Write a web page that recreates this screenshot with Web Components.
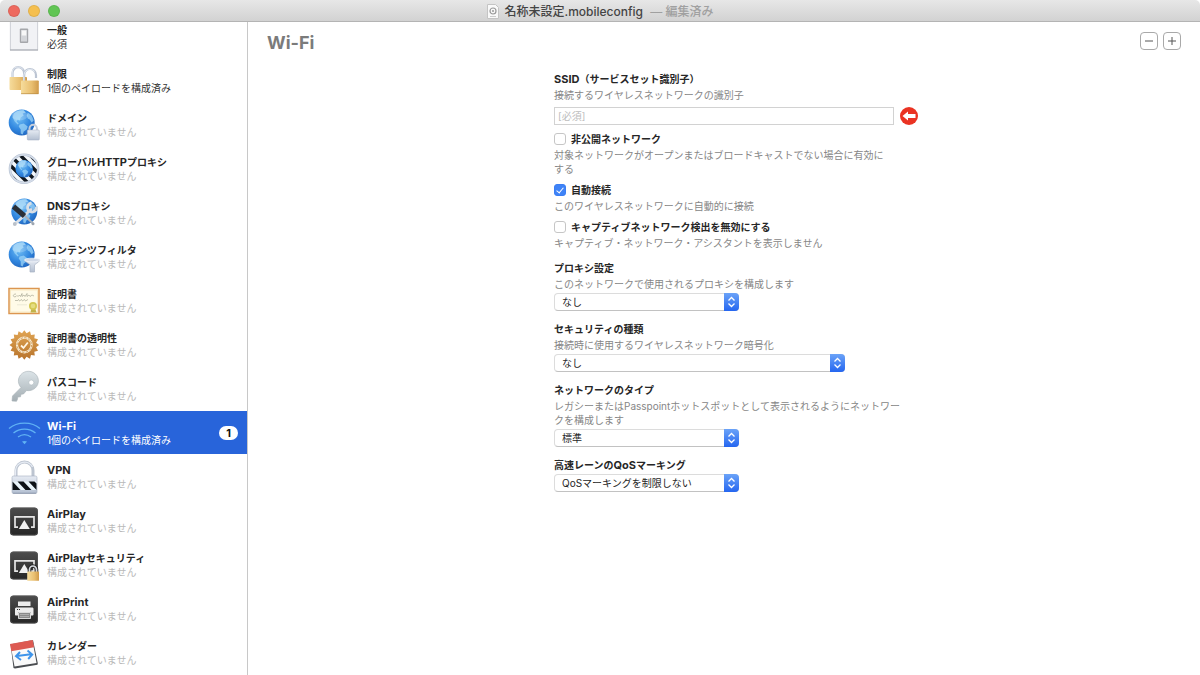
<!DOCTYPE html>
<html lang="ja">
<head>
<meta charset="utf-8">
<title>名称未設定.mobileconfig</title>
<style>
  body {
    margin: 0;
    background: #fff;
    color: #262626;
    font-family: Inter, "Noto Sans CJK JP", sans-serif;
    font-size: 10px;
    line-height: 14px;
  }

  /* latin words in titles run a size larger beside kana and kanji */
  .en { font-size: 11px; line-height: 1; }
</style>
</head>
<body>
<config-window>
  <title-bar slot="bar" status="編集済み">名称未設定.mobileconfig</title-bar>

  <payload-list slot="side">
    <payload-item icon="general" state="required">一般<span slot="note">必須</span></payload-item>
    <payload-item icon="locks" state="required">制限<span slot="note">1個のペイロードを構成済み</span></payload-item>
    <payload-item icon="domain">ドメイン</payload-item>
    <payload-item icon="proxy">グローバル<span class="en">HTTP</span>プロキシ</payload-item>
    <payload-item icon="dns"><span class="en">DNS</span>プロキシ</payload-item>
    <payload-item icon="filter">コンテンツフィルタ</payload-item>
    <payload-item icon="certificate">証明書</payload-item>
    <payload-item icon="seal">証明書の透明性</payload-item>
    <payload-item icon="key">パスコード</payload-item>
    <payload-item icon="wifi" state="selected" count="1"><span class="en">Wi-Fi</span><span slot="note">1個のペイロードを構成済み</span></payload-item>
    <payload-item icon="vpn"><span class="en">VPN</span></payload-item>
    <payload-item icon="airplay"><span class="en">AirPlay</span></payload-item>
    <payload-item icon="airplaylock"><span class="en">AirPlay</span>セキュリティ</payload-item>
    <payload-item icon="airprint"><span class="en">AirPrint</span></payload-item>
    <payload-item icon="calendar">カレンダー</payload-item>
  </payload-list>

  <payload-panel heading="Wi-Fi">
    <text-field placeholder="[必須]" missing><span class="en">SSID</span>（サービスセット識別子）<span slot="help">接続するワイヤレスネットワークの識別子</span></text-field>
    <check-field>非公開ネットワーク<span slot="help">対象ネットワークがオープンまたはブロードキャストでない場合に有効にする</span></check-field>
    <check-field checked>自動接続<span slot="help">このワイヤレスネットワークに自動的に接続</span></check-field>
    <check-field>キャプティブネットワーク検出を無効にする<span slot="help">キャプティブ・ネットワーク・アシスタントを表示しません</span></check-field>
    <select-field value="なし">プロキシ設定<span slot="help">このネットワークで使用されるプロキシを構成します</span></select-field>
    <select-field value="なし" wide>セキュリティの種類<span slot="help">接続時に使用するワイヤレスネットワーク暗号化</span></select-field>
    <select-field value="標準">ネットワークのタイプ<span slot="help">レガシーまたはPasspointホットスポットとして表示されるようにネットワークを構成します</span></select-field>
    <select-field value="QoSマーキングを制限しない">高速レーンの<span class="en">QoS</span>マーキング</select-field>
  </payload-panel>
</config-window>

<script>
const globe = (cx, cy, r) => `
  <g transform="translate(${cx} ${cy}) scale(${r / 13})">
    <circle r="13" fill="url(#blue)"/>
    <path fill="#a4dafa" opacity=".7" d="M-8-9C-5-12-1-13 2-12.500L4-10 1-9 2-7-1-5-2-2-4-3-5-1-3 1-4 2-7-1-9-5zM-2 2 2 1 6 4 5 7 2 9 1 12-1 11-1 7-3 4zM6-10 10-7 12-2 10 0 8-3 6-4 5-7z"/>
    <ellipse cx="-2" cy="-7" rx="8" ry="5" fill="#fff" opacity=".2"/>
  </g>`;

const tile = `
  <rect x="1" y="1.500" width="28" height="28" rx="3.500" fill="url(#dark)"/>
  <rect x="1.500" y="2" width="27" height="27" rx="3" fill="none" stroke="#5a5a5a" stroke-width=".6"/>`;

const screen = `
  <path fill="none" stroke="#e6e6e6" stroke-width="1.700" d="M9 21.200H6V10.800h19v10.400h-3"/>
  <path fill="#f0f0f0" d="M15.300 14 20.800 23H9.800z"/>`;

const sealPoints = Array.from({ length: 32 }, (_, i) => {
  const r = i % 2 ? 12 : 14.8;
  const a = i * Math.PI / 16;
  return `${(15.3 + r * Math.sin(a)).toFixed(1)},${(15 - r * Math.cos(a)).toFixed(1)}`;
}).join(" ");

const icons = {
  general: `
    <rect x="1.300" y="-3" width="27.400" height="31" fill="#f1f2f5" stroke="#c3c6cd" stroke-width=".8"/>
    <path stroke="#a5a8af" d="M1 28h28"/>
    <rect x="10.800" y="6.500" width="8.400" height="14.500" rx="1" fill="#a5a7ab"/>
    <rect x="12" y="8" width="6" height="11.500" fill="#d3d5d9"/>
    <rect x="12.800" y="8.500" width="4.400" height="5" fill="#f7f7f7"/>`,
  locks: `
    <path fill="none" stroke="#bcc5d3" stroke-width="2.200" d="M3.500 12V7a5.800 5.800 0 0 1 11.600 0v4"/>
    <path fill="none" stroke="#e8edf5" stroke-width=".9" d="M3.200 12V7a6 6 0 0 1 11-3.400"/>
    <rect x=".5" y="11" width="17.500" height="13" rx=".8" fill="url(#gold)"/>
    <path fill="none" stroke="#bcc5d3" stroke-width="2.200" d="M15 16V9a6 6 0 0 1 12 0v3"/>
    <path fill="none" stroke="#e8edf5" stroke-width=".9" d="M14.800 16V9a6.200 6.200 0 0 1 11-3.500"/>
    <rect x="12" y="14.500" width="17.800" height="13.500" rx=".8" fill="url(#gold)"/>
    <path stroke="#b98a41" stroke-width=".7" d="M12 27.700h17.500"/>`,
  domain: `${globe(12.7, 12.5, 13)}
    <path fill="none" stroke="#c6cedb" stroke-width="2" d="M20.500 21v-2.500a3.700 3.700 0 0 1 7.400 0V21"/>
    <rect x="18.300" y="20" width="12" height="10" rx=".8" fill="url(#steel)" stroke="#9eabbf" stroke-width=".5"/>`,
  proxy: `
    <circle cx="15" cy="14.700" r="15.300" fill="#b3bfd1"/>
    <circle cx="15" cy="14.700" r="12.800" fill="#f4f8fc"/>
    <g clip-path="url(#disc)" stroke="#111820" stroke-width="3.400"><path d="M-2-2 32 32M6-4 40 30M-10 0 24 34M14-6 48 28M-18 2 16 36"/></g>
    <circle cx="15" cy="14.700" r="14" fill="none" stroke="#d4dce8" stroke-width="1.500"/>
    ${globe(15.2, 14.8, 8.8)}`,
  dns: `${globe(15.3, 13.5, 13)}
    <path stroke="#d9dfe6" stroke-width="3" stroke-linecap="round" d="M6.500 25.500 22 11.500"/>
    <path fill="none" stroke="#d9dfe6" stroke-width="3" d="M27.500 8.500a4.500 4.500 0 1 1-5-3.500"/>
    <path stroke="#aab2bb" stroke-width="2" stroke-linecap="round" d="m15 17 9 8.500"/>
    <path stroke="#2a3038" stroke-width="5" d="m4.500 8.500 11 9.500"/>
    <circle cx="5.800" cy="26" r="1.900" fill="#b9c0c9"/><circle cx="24" cy="25.700" r="1.500" fill="#9ea6b0"/>`,
  filter: `${globe(12.7, 12.5, 13)}
    <path fill="url(#steel)" stroke="#a8b2c3" stroke-width=".7" d="M15.500 18c2 3 5.500 4 5.500 5v7h4.500v-7c0-1 4-2 5.500-5z"/>
    <ellipse cx="23.200" cy="18" rx="7.800" ry="1.800" fill="#d1d9e7" stroke="#f4f7fb" stroke-width=".7"/>`,
  certificate: `
    <rect y="2.500" width="30" height="25" fill="#fffbe8" stroke="#dc9650" stroke-width="1.500"/>
    <rect x="1.500" y="4" width="27" height="22" fill="none" stroke="#f6e2b4" stroke-width=".7"/>
    <g stroke="#a9a996" stroke-width=".7" fill="none"><path d="M7 8c-4 0-3 4 0 2.500l1-1 1 1 1.500-1.500 1 1.500 1.500-3v3l2-1.500 1 1.500 2-3v3l2-1.500 1 1.500 2-1.500 2 1"/><path d="m6 15 1-1 1 1 1.500-1.500 1 1.500 2-1.500 1 1.500 2-1.500 1 1.500 2.500-1.500"/></g>
    <path stroke="#dcdbca" stroke-width=".6" d="M8 18.800h10"/>
    <path fill="#c2b34a" d="m22.500 22-1 4.500h6L26 22z"/><circle cx="24" cy="20" r="4" fill="#d4c853"/><circle cx="24" cy="20" r="2.300" fill="#e5dd80"/>`,
  seal: `
    <polygon fill="url(#bronze)" points="${sealPoints}"/>
    <circle cx="15.300" cy="15" r="7.300" fill="none" stroke="#f8ead1" stroke-width="2.200"/>
    <circle cx="15.300" cy="15" r="7.300" fill="none" stroke="#c48a3e" stroke-width=".8" stroke-dasharray="2.300 1.500"/>
    <path fill="none" stroke="#fff5e4" stroke-width="1.800" d="m12 15.500 2.500 2.500 4.300-5.500"/>`,
  key: `
    <path fill="url(#keysteel)" stroke="#a6b0b6" stroke-width=".6" d="M12 13.500 3.500 22l-.5 5 4.500.3 1-2 .3-2.300 2.700-.2.500-2.500 2.500-.3 3-3.500A10 9.700 0 1 0 12 13.500z"/>
    <circle cx="22.300" cy="8.500" r="2.500" fill="#fff" stroke="#a7b2b8" stroke-width=".5"/>`,
  wifi: `
    <g fill="none" stroke="#60b2f4" stroke-width="1.300"><path d="M0 10.500c8-7.300 23-7.300 31 0M4.500 15c6-5.300 16-5.300 22 0M9 19c4-3 9-3 13 0"/></g>
    <path fill="#60b2f4" d="M13 23.500c1.500-.8 3.500-.8 5 0l-2.500 2.800z"/>`,
  vpn: `
    <path fill="none" stroke="#bcc4d0" stroke-width="3" d="M7 15V8.500a8.500 8.500 0 0 1 17 0V15"/>
    <path fill="none" stroke="#e7ecf4" stroke-width="1.300" d="M6.500 15V8.500a9 9 0 0 1 17-3.500"/>
    <rect x="3" y="14" width="25" height="17.500" rx="1.500" fill="url(#steel)" stroke="#a4afbf" stroke-width=".6"/>
    <rect x="3.500" y="19.500" width="24" height="8.500" fill="#e9f4fa"/>
    <path fill="#0d1116" d="M3.500 19.500 11.500 28h-8zM8.500 19.500h6l8 8.500h-6zM19.500 19.500h6l2 2V28z"/>
    <path stroke="#8793a6" stroke-width=".8" d="M4 31.200h23"/>`,
  airplay: tile + screen,
  airplaylock: `${tile}${screen}
    <path fill="none" stroke="#222" stroke-width="3.600" d="M20.500 22v-2.500a3.500 3.500 0 0 1 7 0V22"/>
    <path fill="none" stroke="#d6d9df" stroke-width="1.700" d="M20.500 22v-2.500a3.500 3.500 0 0 1 7 0V22"/>
    <rect x="18.200" y="21.500" width="11.800" height="9.300" rx=".6" fill="url(#gold)"/>`,
  airprint: `${tile}
    <path fill="#ececec" d="M9 7.500h12.500V12H9zM8 13.500h15c1 0 1.500.5 1.500 1.500v5.500c0 .7-.5 1-1.200 1h-1.500V18H9v3.500H7.200c-.8 0-1.200-.4-1.200-1V15c0-1 .7-1.500 2-1.500z"/>
    <path fill="#8a8a8a" stroke="#e8e8e8" stroke-width=".9" d="M9.500 18.500h12v6h-12z"/>
    <path stroke="#c4c4c4" stroke-width=".6" d="M11 20.500h9M11 22.500h9"/>
    <path stroke="#333" d="M8 15.500h1M10 15.500h1"/>`,
  calendar: `
    <path fill="#4a4d51" d="m1 6.500.8 2L4.500 30l1.500.6 22.500-3.800.3-1.500L24 2z"/>
    <path fill="#fafafa" d="M1.500 6.500 23.500 2.500 27.500 25 5.500 28.500z"/>
    <path fill="#dd5a52" d="M1 6 23.700 2l1.400 7.300L2.300 13.300z"/>
    <path fill="none" stroke="#3e94ea" stroke-width="2" d="m11 14-4 4.200 5 3.800M18.500 12.500l4.700 4-4 4.500M8 18l14-1.700"/>`
};

const defs = `
  <defs>
    <radialGradient id="blue" cx=".4" cy=".35" r=".75"><stop stop-color="#6fbdf4"/><stop offset=".55" stop-color="#3288e0"/><stop offset="1" stop-color="#1d5fb8"/></radialGradient>
    <linearGradient id="dark" x2="0" y2="1"><stop stop-color="#4d4d4d"/><stop offset="1" stop-color="#262626"/></linearGradient>
    <linearGradient id="gold"><stop stop-color="#f6dc9c"/><stop offset=".6" stop-color="#e9bf70"/><stop offset="1" stop-color="#d09a4a"/></linearGradient>
    <linearGradient id="steel" x2="0" y2="1"><stop stop-color="#e6ebf3"/><stop offset="1" stop-color="#b3bfd1"/></linearGradient>
    <linearGradient id="bronze" x2="0" y2="1"><stop stop-color="#e0a554"/><stop offset="1" stop-color="#b8742c"/></linearGradient>
    <linearGradient id="keysteel" x2="0" y2="1"><stop stop-color="#dce4e8"/><stop offset="1" stop-color="#a3adb2"/></linearGradient>
    <clipPath id="disc"><circle cx="15" cy="14.700" r="13"/></clipPath>
  </defs>`;

class ConfigWindow extends HTMLElement {
  constructor() {
    super();
    this.attachShadow({ mode: "open" }).innerHTML = `
      <style>
        :host { display: flex; flex-direction: column; height: 100vh; overflow: hidden; }
        .body { flex: 1; display: flex; min-height: 0; }
      </style>
      <slot name="bar"></slot>
      <div class="body">
        <slot name="side"></slot>
        <slot></slot>
      </div>
    `;
  }
}

class TitleBar extends HTMLElement {
  constructor() {
    super();
    this.attachShadow({ mode: "open" }).innerHTML = `
      <style>
        :host {
          flex: none;
          display: grid;
          grid-template-columns: 1fr auto 1fr;
          align-items: center;
          height: 21px;
          padding: 0 8px;
          border-bottom: 1px solid #b4b4b4;
          border-radius: 5px 5px 0 0;
          background: linear-gradient(#e7e7e7, #d2d2d2);
          font-size: 12px;
          color: #444;
        }
        .lights { display: flex; gap: 8px; }
        button {
          width: 12px;
          height: 12px;
          padding: 0;
          border: 1px solid rgba(0, 0, 0, .08);
          border-radius: 50%;
        }
        .close { background: #ee6a5f; }
        .min { background: #f5bf4f; }
        .zoom { background: #61c554; }
        .name { display: flex; align-items: center; gap: 6px; padding-top: 2px; font-weight: 500; }
        .status { margin-left: 4px; color: #a0a0a0; }
        svg { display: block; }
      </style>
      <div class="lights">
        <button class="close" aria-label="閉じる"></button>
        <button class="min" aria-label="しまう"></button>
        <button class="zoom" aria-label="拡大"></button>
      </div>
      <div class="name">
        <svg width="12" height="15" viewBox="0 0 12 15">
          <path d="M.5.500h8l3 3v11H.5z" fill="#f9f9f9" stroke="#c4c4c4"/>
          <circle cx="6" cy="7" r="3" fill="none" stroke="#999" stroke-width="1.200"/>
          <circle cx="6" cy="7" r="1" fill="#999"/>
          <path d="M3 12.500h6" stroke="#ccc"/>
        </svg>
        <span><slot></slot> <span class="status">— ${this.getAttribute("status")}</span></span>
      </div>
    `;
  }
}

class PayloadList extends HTMLElement {
  constructor() {
    super();
    this.attachShadow({ mode: "open" }).innerHTML = `
      <style>
        :host {
          flex: none;
          width: 247px;
          border-right: 1px solid #c8c8c8;
          overflow-y: auto;
          scrollbar-width: none;
        }
        nav { padding-bottom: 8px; }
      </style>
      <nav><slot></slot></nav>
    `;
  }

  connectedCallback() {
    // the list opens scrolled a little past the first row
    requestAnimationFrame(() => { this.scrollTop = 7; });
  }
}

class PayloadItem extends HTMLElement {
  constructor() {
    super();
    const count = this.getAttribute("count");
    this.attachShadow({ mode: "open" }).innerHTML = `
      <style>
        :host { display: block; }
        a {
          display: flex;
          align-items: center;
          gap: 8px;
          height: 43px;
          padding: 0 9px;
          border-bottom: 1px solid #fff;
          color: #262626;
          text-decoration: none;
        }
        svg { flex: none; display: block; overflow: visible; }
        .text { flex: 1; white-space: nowrap; }
        .title { font-weight: 700; }
        .note { color: #b9b9b9; }
        :host([state]) .note { color: #333; }
        :host([state="selected"]) a { background: #2864da; color: #fff; }
        :host([state="selected"]) .note { color: #fff; }
        .count {
          min-width: 19px;
          border-radius: 7px;
          background: #fff;
          color: #111;
          font-size: 11px;
          font-weight: 700;
          text-align: center;
        }
      </style>
      <a href="#${this.getAttribute("icon")}">
        <svg width="30" height="30" viewBox="0 0 30 30">${defs}${icons[this.getAttribute("icon")]}</svg>
        <div class="text">
          <div class="title"><slot></slot></div>
          <div class="note"><slot name="note">構成されていません</slot></div>
        </div>
        ${count ? `<span class="count">${count}</span>` : ""}
      </a>
    `;
  }
}

class PayloadPanel extends HTMLElement {
  constructor() {
    super();
    this.attachShadow({ mode: "open" }).innerHTML = `
      <style>
        :host { flex: 1; min-width: 0; overflow: auto; }
        header {
          display: flex;
          align-items: flex-start;
          justify-content: space-between;
          padding: 10px 19px 0 19px;
        }
        h1 { margin: 0; font-size: 18px; line-height: 22px; font-weight: 700; color: #7b7b7b; }
        .tools { display: flex; gap: 5px; }
        button {
          display: grid;
          place-items: center;
          width: 18px;
          height: 18px;
          padding: 0;
          border: 1px solid #a9a9a9;
          border-radius: 4px;
          background: #fff;
        }
        form {
          max-width: 364px;
          margin: 0 auto;
          padding: 18px 0 16px 24px;
        }
      </style>
      <header>
        <h1>${this.getAttribute("heading")}</h1>
        <div class="tools">
          <button aria-label="削除"><svg width="10" height="10"><path d="M1 5h8" stroke="#555"/></svg></button>
          <button aria-label="追加"><svg width="10" height="10"><path d="M1 5h8M5 1v8" stroke="#555"/></svg></button>
        </div>
      </header>
      <form><slot></slot></form>
    `;
  }
}

const fieldStyle = `
  :host { display: block; }
  label { display: block; font-weight: 700; }
  .help { max-width: 355px; padding-top: 2px; color: #868686; }
  input, select { box-sizing: border-box; margin: 0; font: inherit; color: inherit; }
`;

class TextField extends HTMLElement {
  constructor() {
    super();
    this.attachShadow({ mode: "open" }).innerHTML = `
      <style>
        ${fieldStyle}
        .row { display: flex; align-items: center; gap: 6px; padding-top: 5px; }
        input {
          flex: 1;
          min-width: 0;
          height: 18px;
          padding: 0 3px;
          border: 1px solid #d2d2d2;
          background: #fff;
        }
        input::placeholder { color: #bdbdbd; }
        svg { flex: none; display: block; }
      </style>
      <label for="box"><slot></slot></label>
      <div class="help"><slot name="help"></slot></div>
      <div class="row">
        <input id="box" type="text" placeholder="${this.getAttribute("placeholder")}">
        ${this.hasAttribute("missing") ? `
        <svg width="18" height="18" viewBox="0 0 18 18">
          <circle cx="9" cy="9" r="9" fill="#ea3323"/>
          <path fill="#fff" d="M2.500 9 8 4.500V7h7.500v4H8v2.500z"/>
        </svg>` : ""}
      </div>
    `;
  }
}

class CheckField extends HTMLElement {
  constructor() {
    super();
    this.attachShadow({ mode: "open" }).innerHTML = `
      <style>
        ${fieldStyle}
        :host { padding-top: 7px; }
        label { display: flex; align-items: center; gap: 5px; }
        .help { max-width: 336px; }
        input {
          appearance: none;
          display: grid;
          place-items: center;
          width: 12px;
          height: 12px;
          border: 1px solid #c6c6c6;
          border-radius: 3px;
          background: #fff;
        }
        input:checked { border-color: #3b7ef3; background: #3f83f7; }
        input:checked::before {
          content: "";
          width: 3px;
          height: 6px;
          margin-bottom: 2px;
          border: solid #fff;
          border-width: 0 1px 1px 0;
          transform: rotate(40deg);
        }
      </style>
      <label><input type="checkbox" ${this.hasAttribute("checked") ? "checked" : ""}><span><slot></slot></span></label>
      <div class="help"><slot name="help"></slot></div>
    `;
  }
}

class SelectField extends HTMLElement {
  constructor() {
    super();
    const help = this.querySelector("[slot=help]");
    this.attachShadow({ mode: "open" }).innerHTML = `
      <style>
        ${fieldStyle}
        :host { padding-top: 11px; }
        .pop { display: grid; width: 185px; padding-top: 2px; }
        :host([wide]) .pop { width: 291px; }
        select, .arrows { grid-area: 1 / 1; }
        select {
          appearance: none;
          height: 18px;
          padding: 0 20px 0 7px;
          border: 1px solid #dcdcdc;
          border-bottom-color: #c2c2c2;
          border-radius: 4px;
          background: #fff;
        }
        .arrows {
          justify-self: end;
          display: grid;
          place-items: center;
          width: 15px;
          height: 18px;
          border-radius: 0 4px 4px 0;
          background: linear-gradient(#6ba3f8, #2566f0);
          pointer-events: none;
        }
      </style>
      <label for="pop"><slot></slot></label>
      ${help ? `<div class="help"><slot name="help"></slot></div>` : ""}
      <div class="pop">
        <select id="pop"><option>${this.getAttribute("value")}</option></select>
        <span class="arrows">
          <svg width="9" height="12" viewBox="0 0 9 12"><path d="M1.500 4.500l3-3 3 3M1.500 7.500l3 3 3-3" fill="none" stroke="#fff" stroke-width="1.300"/></svg>
        </span>
      </div>
    `;
  }
}

customElements.define("config-window", ConfigWindow);
customElements.define("title-bar", TitleBar);
customElements.define("payload-list", PayloadList);
customElements.define("payload-item", PayloadItem);
customElements.define("payload-panel", PayloadPanel);
customElements.define("text-field", TextField);
customElements.define("check-field", CheckField);
customElements.define("select-field", SelectField);
</script>
</body>
</html>
